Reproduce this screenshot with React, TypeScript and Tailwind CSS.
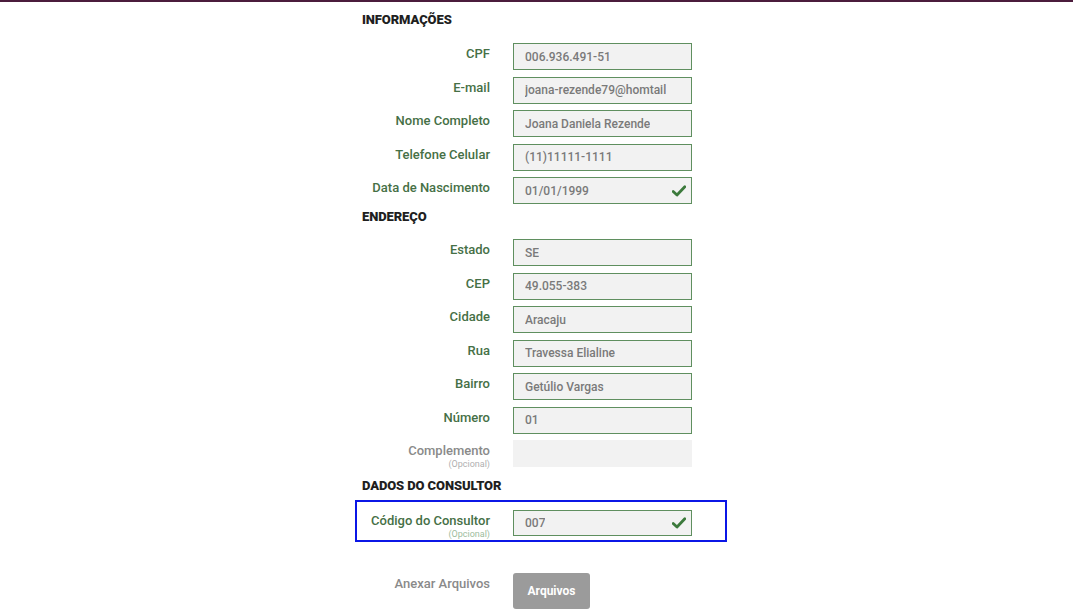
import React from "react";

type Field = {
  label: string;
  value?: string;
  check?: boolean;
  optional?: boolean;
  muted?: boolean;
  short?: boolean;
};

const info: Field[] = [
  { label: "CPF", value: "006.936.491-51" },
  { label: "E-mail", value: "joana-rezende79@homtail" },
  { label: "Nome Completo", value: "Joana Daniela Rezende" },
  { label: "Telefone Celular", value: "(11)11111-1111" },
  { label: "Data de Nascimento", value: "01/01/1999", check: true },
];

const endereco: Field[] = [
  { label: "Estado", value: "SE" },
  { label: "CEP", value: "49.055-383" },
  { label: "Cidade", value: "Aracaju" },
  { label: "Rua", value: "Travessa Elialine" },
  { label: "Bairro", value: "Getúlio Vargas" },
  { label: "Número", value: "01" },
];

function Check() {
  return (
    <svg width="14" height="12" viewBox="0 0 14 12" className="shrink-0">
      <path d="M1.2 6.4 L5 10 L12.8 1.8" fill="none" stroke="#3c7a3c" strokeWidth="2.8" strokeLinecap="round" strokeLinejoin="round" />
    </svg>
  );
}

function Row({ f }: { f: Field }) {
  return (
    <div className="flex items-start gap-[23px]">
      <div className="w-[135px] flex flex-col items-end pt-[3px]">
        <span className={`text-[13px] leading-[16px] font-medium ${f.muted ? "text-[#8a8a8a]" : "text-[#467046]"}`}>{f.label}</span>
        {f.optional && (
          <span className={`text-[9px] leading-[11px] ${f.muted ? "text-[#b0b0b0]" : "text-[#9dbd9d]"}`}>(Opcional)</span>
        )}
      </div>
      <div
        className={`w-[179px] ${f.short ? "h-[26px]" : "h-[27px]"} flex items-center justify-between pl-[11px] pr-[5px] bg-[#f2f2f2] ${
          f.muted ? "" : "border border-[#5f8f5f]"
        }`}
      >
        <span className="text-[12px] text-[#7a7a7a] font-medium whitespace-nowrap overflow-hidden">{f.value}</span>
        {f.check && <Check />}
      </div>
    </div>
  );
}

function Header({ children }: { children: React.ReactNode }) {
  return <div className="pl-[7px] text-[13px] leading-[16px] font-black text-[#1f1f1f] tracking-[-0.1px]">{children}</div>;
}

export default function App() {
  return (
    <div className="min-h-[613px] bg-white font-['Roboto',sans-serif]">
      <div className="h-[2px] bg-[#4b1c3c]" />
      <div className="ml-[355px] w-[372px] flex flex-col">
        <div className="pt-[10px] pb-[15px]">
          <Header>INFORMAÇÕES</Header>
        </div>
        <div className="flex flex-col gap-[6.5px]">
          {info.map((f) => (
            <Row key={f.label} f={f} />
          ))}
        </div>
        <div className="pt-[5px] pb-[14px]">
          <Header>ENDEREÇO</Header>
        </div>
        <div className="flex flex-col gap-[6.5px]">
          {endereco.map((f) => (
            <Row key={f.label} f={f} />
          ))}
          <Row f={{ label: "Complemento", optional: true, muted: true }} />
        </div>
        <div className="pt-[8px] pb-[6px]">
          <Header>DADOS DO CONSULTOR</Header>
        </div>
        <div className="border-2 border-[#0b16e6] pt-[8px]">
          <div className="-ml-[2px]">
            <Row f={{ label: "Código do Consultor", value: "007", check: true, optional: true, short: true }} />
          </div>
        </div>
        <div className="pt-[31px] flex items-start gap-[23px]">
          <div className="w-[135px] flex justify-end pt-[3px]">
            <span className="text-[13px] leading-[16px] font-medium text-[#8a8a8a]">Anexar Arquivos</span>
          </div>
          <button className="w-[77px] h-[36px] rounded-[3px] bg-[#9b9b9b] text-white text-[12px] font-bold">Arquivos</button>
        </div>
      </div>
    </div>
  );
}
